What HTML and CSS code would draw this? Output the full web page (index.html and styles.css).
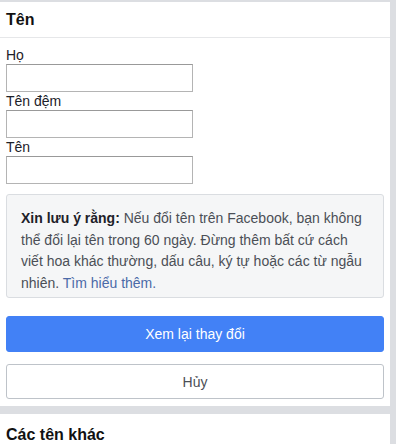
FILE: index.html
```html
<!DOCTYPE html>
<html lang="vi">
<head>
<meta charset="utf-8">
<title>Tên</title>
<link rel="stylesheet" href="styles.css">
</head>
<body>
<div class="page">
  <section class="card">
    <div class="card-header">Tên</div>
    <div class="card-body">
      <div class="field">
        <label class="field-label">Họ</label>
        <input class="field-input" type="text">
      </div>
      <div class="field">
        <label class="field-label">Tên đệm</label>
        <input class="field-input" type="text">
      </div>
      <div class="field">
        <label class="field-label">Tên</label>
        <input class="field-input" type="text">
      </div>
      <div class="notice">
        <b>Xin lưu ý rằng:</b> Nếu đổi tên trên Facebook, bạn không<br>thể đổi lại tên trong 60 ngày. Đừng thêm bất cứ cách<br>viết hoa khác thường, dấu câu, ký tự hoặc các từ ngẫu<br>nhiên. <a class="notice-link" href="#">Tìm hiểu thêm.</a>
      </div>
      <button class="btn btn-primary" type="button">Xem lại thay đổi</button>
      <button class="btn btn-secondary" type="button">Hủy</button>
    </div>
  </section>
  <section class="card card-second">
    <div class="card-header card-header-plain">Các tên khác</div>
  </section>
</div>
</body>
</html>
```

FILE: styles.css
```css
html, body {
  margin: 0;
  padding: 0;
}
body {
  background: #dcdee2;
  font-family: "Liberation Sans", Arial, sans-serif;
  color: #1d2129;
  width: 396px;
  height: 444px;
  overflow: hidden;
}
.page {
  padding-top: 2px;
  padding-right: 6px;
  display: flex;
  flex-direction: column;
  gap: 8px;
}
.card {
  background: #ffffff;
}
.card-header {
  height: 35px;
  line-height: 36px;
  padding: 0 6px;
  font-size: 16px;
  font-weight: bold;
  color: #111111;
  border-bottom: 1px solid #e6e7e9;
}
.card-header-plain {
  border-bottom: none;
  line-height: 42px;
}
.card-body {
  padding: 8px 6px 7px 6px;
  display: flex;
  flex-direction: column;
}
.field {
  display: flex;
  flex-direction: column;
}
.field-label {
  font-size: 14px;
  line-height: 18px;
  height: 18px;
  color: #1d2129;
}
.field-input {
  box-sizing: border-box;
  width: 187px;
  height: 28px;
  margin: 0;
  border: 1px solid #b4b4b4;
  border-top-color: #999999;
  border-radius: 0;
  background: #ffffff;
  padding: 0 4px;
  font-family: inherit;
  font-size: 14px;
}
.notice {
  margin-top: 10px;
  box-sizing: border-box;
  width: 378px;
  height: 104px;
  background: #f5f6f7;
  border: 1px solid #dadde1;
  border-radius: 3px;
  padding: 13px 4px 0 14px;
  font-size: 14px;
  line-height: 21.7px;
  color: #4b4f56;
  white-space: nowrap;
}
.notice b {
  color: #1d2129;
}
.notice-link {
  color: #4b6aa8;
  text-decoration: none;
}
.btn {
  box-sizing: border-box;
  width: 378px;
  font-family: inherit;
  font-size: 14px;
  border-radius: 3px;
  margin: 0;
  cursor: pointer;
}
.btn-primary {
  margin-top: 18px;
  height: 36px;
  background: #4281f6;
  border: 1px solid #4281f6;
  color: #ffffff;
}
.btn-secondary {
  margin-top: 12px;
  height: 35px;
  background: #ffffff;
  border: 1px solid #bec3c9;
  color: #4b4f56;
}
```
